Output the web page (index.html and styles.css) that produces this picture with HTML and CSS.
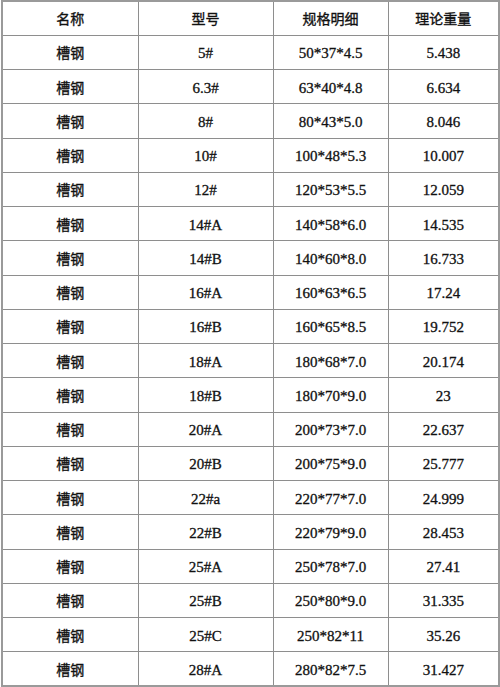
FILE: index.html
```html
<!DOCTYPE html>
<html lang="zh-CN">
<head>
<meta charset="utf-8">
<title>槽钢理论重量表</title>
<link rel="stylesheet" href="styles.css">
</head>
<body>
<table class="sheet">
  <colgroup>
    <col class="c1"><col class="c2"><col class="c3"><col class="c4">
  </colgroup>
  <thead>
    <tr><th>名称</th><th>型号</th><th>规格明细</th><th>理论重量</th></tr>
  </thead>
  <tbody>
    <tr><td class="zh">槽钢</td><td>5#</td><td>50*37*4.5</td><td>5.438</td></tr>
    <tr><td class="zh">槽钢</td><td>6.3#</td><td>63*40*4.8</td><td>6.634</td></tr>
    <tr><td class="zh">槽钢</td><td>8#</td><td>80*43*5.0</td><td>8.046</td></tr>
    <tr><td class="zh">槽钢</td><td>10#</td><td>100*48*5.3</td><td>10.007</td></tr>
    <tr><td class="zh">槽钢</td><td>12#</td><td>120*53*5.5</td><td>12.059</td></tr>
    <tr><td class="zh">槽钢</td><td>14#A</td><td>140*58*6.0</td><td>14.535</td></tr>
    <tr><td class="zh">槽钢</td><td>14#B</td><td>140*60*8.0</td><td>16.733</td></tr>
    <tr><td class="zh">槽钢</td><td>16#A</td><td>160*63*6.5</td><td>17.24</td></tr>
    <tr><td class="zh">槽钢</td><td>16#B</td><td>160*65*8.5</td><td>19.752</td></tr>
    <tr><td class="zh">槽钢</td><td>18#A</td><td>180*68*7.0</td><td>20.174</td></tr>
    <tr><td class="zh">槽钢</td><td>18#B</td><td>180*70*9.0</td><td>23</td></tr>
    <tr><td class="zh">槽钢</td><td>20#A</td><td>200*73*7.0</td><td>22.637</td></tr>
    <tr><td class="zh">槽钢</td><td>20#B</td><td>200*75*9.0</td><td>25.777</td></tr>
    <tr><td class="zh">槽钢</td><td>22#a</td><td>220*77*7.0</td><td>24.999</td></tr>
    <tr><td class="zh">槽钢</td><td>22#B</td><td>220*79*9.0</td><td>28.453</td></tr>
    <tr><td class="zh">槽钢</td><td>25#A</td><td>250*78*7.0</td><td>27.41</td></tr>
    <tr><td class="zh">槽钢</td><td>25#B</td><td>250*80*9.0</td><td>31.335</td></tr>
    <tr><td class="zh">槽钢</td><td>25#C</td><td>250*82*11</td><td>35.26</td></tr>
    <tr><td class="zh">槽钢</td><td>28#A</td><td>280*82*7.5</td><td>31.427</td></tr>
  </tbody>
</table>
</body>
</html>
```

FILE: styles.css
```css
html, body {
  margin: 0;
  padding: 0;
  background: #ffffff;
}

body {
  padding: 0 0 0 1px;
}

.sheet {
  border-collapse: collapse;
  table-layout: fixed;
  width: 497px;
  border: 2px solid #9a9a9a;
  color: #111111;
}

.c1 { width: 136px; }
.c2 { width: 135px; }
.c3 { width: 115px; }
.c4 { width: 111px; }

.sheet tr {
  height: 34.25px;
}

.sheet th,
.sheet td {
  border: 1px solid #8e8e8e;
  padding: 2px 0 0 0;
  text-align: center;
  vertical-align: middle;
  font-family: "Liberation Serif", "Noto Sans CJK SC", serif;
  font-size: 15px;
  font-weight: normal;
  line-height: 16px;
  -webkit-text-stroke: 0.3px #111111;
}

.sheet th,
.sheet td.zh {
  font-family: "Noto Sans CJK SC", sans-serif;
  font-size: 14px;
  padding: 0;
  -webkit-text-stroke: 0.35px #111111;
}
```
